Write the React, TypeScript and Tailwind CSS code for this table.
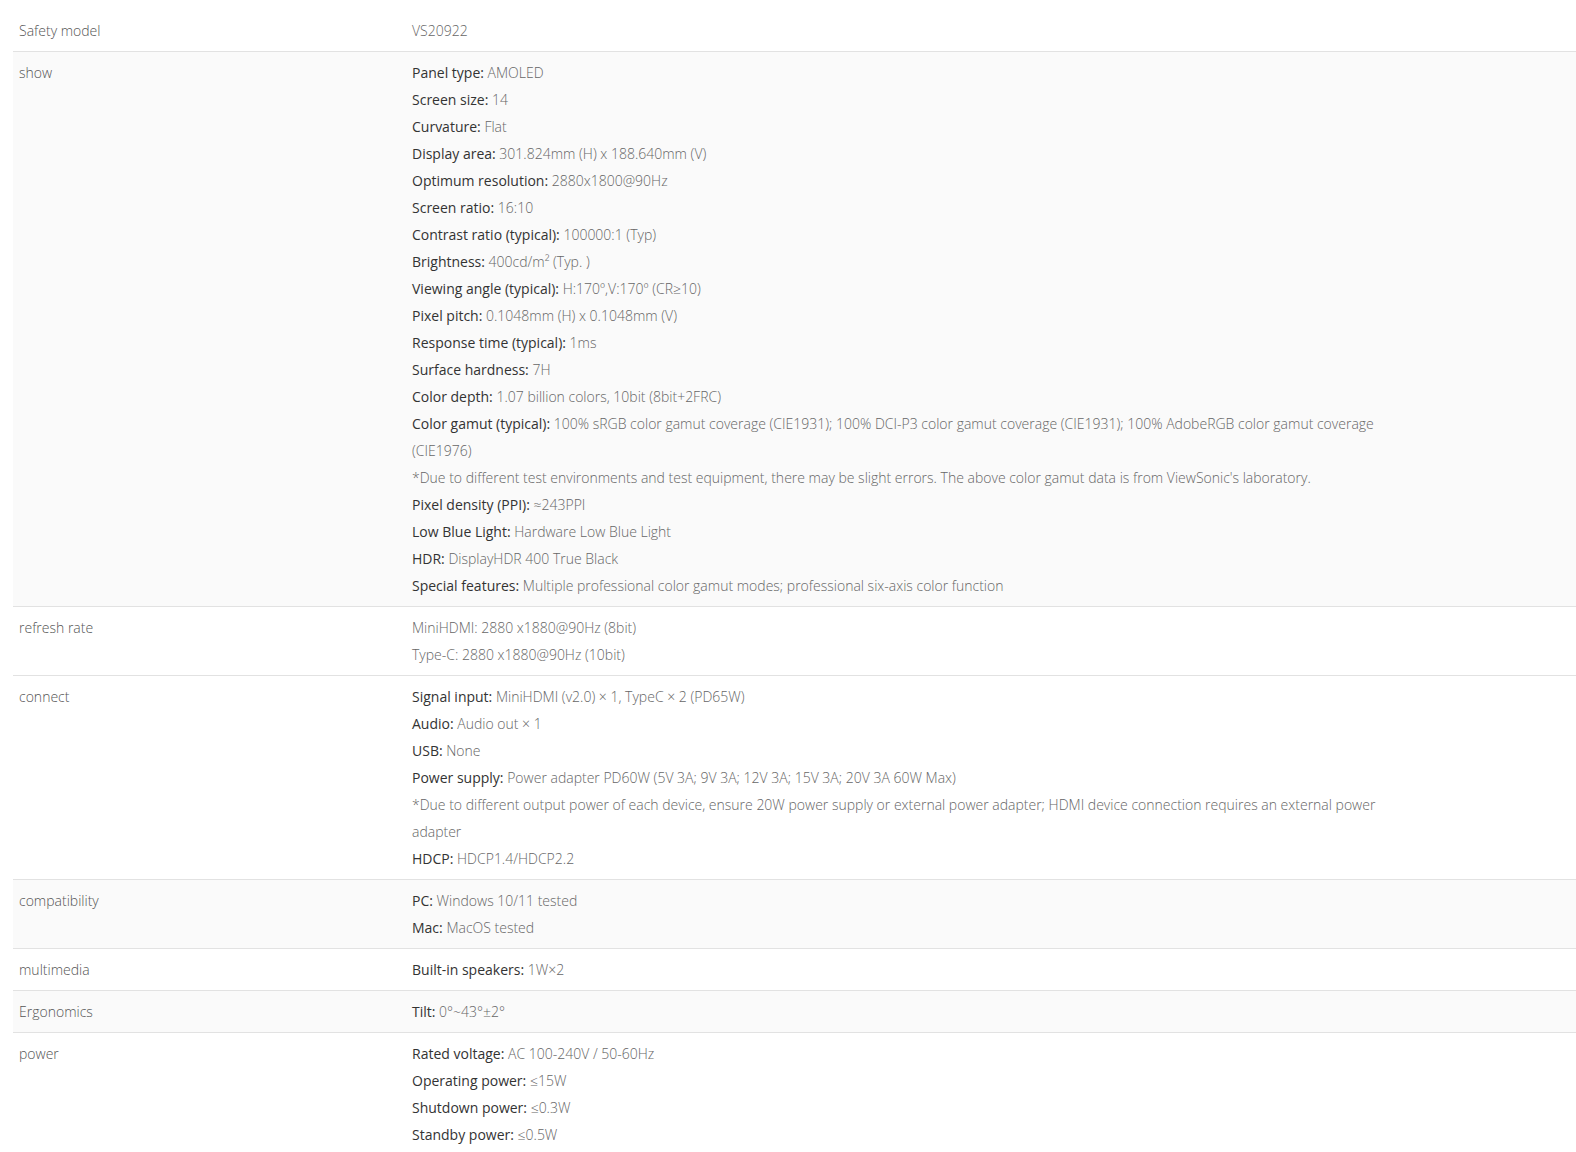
import React from "react";

type Line = { b?: string; t: string };
type Row = { label: string; lines: Line[]; grey?: boolean };

const rows: Row[] = [
  { label: "Safety model", lines: [{ t: "VS20922" }] },
  {
    label: "show",
    grey: true,
    lines: [
      { b: "Panel type:", t: "AMOLED" },
      { b: "Screen size:", t: "14" },
      { b: "Curvature:", t: "Flat" },
      { b: "Display area:", t: "301.824mm (H) x 188.640mm (V)" },
      { b: "Optimum resolution:", t: "2880x1800@90Hz" },
      { b: "Screen ratio:", t: "16:10" },
      { b: "Contrast ratio (typical):", t: "100000:1 (Typ)" },
      { b: "Brightness:", t: "400cd/m² (Typ. )" },
      { b: "Viewing angle (typical):", t: "H:170º,V:170º (CR≥10)" },
      { b: "Pixel pitch:", t: "0.1048mm (H) x 0.1048mm (V)" },
      { b: "Response time (typical):", t: "1ms" },
      { b: "Surface hardness:", t: "7H" },
      { b: "Color depth:", t: "1.07 billion colors, 10bit (8bit+2FRC)" },
      {
        b: "Color gamut (typical):",
        t: "100% sRGB color gamut coverage (CIE1931); 100% DCI-P3 color gamut coverage (CIE1931); 100% AdobeRGB color gamut coverage (CIE1976)",
      },
      {
        t: "*Due to different test environments and test equipment, there may be slight errors. The above color gamut data is from ViewSonic's laboratory.",
      },
      { b: "Pixel density (PPI):", t: "≈243PPI" },
      { b: "Low Blue Light:", t: "Hardware Low Blue Light" },
      { b: "HDR:", t: "DisplayHDR 400 True Black" },
      { b: "Special features:", t: "Multiple professional color gamut modes; professional six-axis color function" },
    ],
  },
  {
    label: "refresh rate",
    lines: [{ t: "MiniHDMI: 2880 x1880@90Hz (8bit)" }, { t: "Type-C: 2880 x1880@90Hz (10bit)" }],
  },
  {
    label: "connect",
    lines: [
      { b: "Signal input:", t: "MiniHDMI (v2.0) × 1, TypeC × 2 (PD65W)" },
      { b: "Audio:", t: "Audio out × 1" },
      { b: "USB:", t: "None" },
      { b: "Power supply:", t: "Power adapter PD60W (5V 3A; 9V 3A; 12V 3A; 15V 3A; 20V 3A 60W Max)" },
      {
        t: "*Due to different output power of each device, ensure 20W power supply or external power adapter; HDMI device connection requires an external power adapter",
      },
      { b: "HDCP:", t: "HDCP1.4/HDCP2.2" },
    ],
  },
  {
    label: "compatibility",
    grey: true,
    lines: [
      { b: "PC:", t: "Windows 10/11 tested" },
      { b: "Mac:", t: "MacOS tested" },
    ],
  },
  { label: "multimedia", lines: [{ b: "Built-in speakers:", t: "1W×2" }] },
  { label: "Ergonomics", grey: true, lines: [{ b: "Tilt:", t: "0°~43°±2°" }] },
  {
    label: "power",
    lines: [
      { b: "Rated voltage:", t: "AC 100-240V / 50-60Hz" },
      { b: "Operating power:", t: "≤15W" },
      { b: "Shutdown power:", t: "≤0.3W" },
      { b: "Standby power:", t: "≤0.5W" },
    ],
  },
];

export default function App() {
  return (
    <div
      className="min-h-screen bg-white pt-[10px] pl-[13px] text-[14px] leading-[27px] overflow-hidden"
      style={{ fontFamily: '"Open Sans", "Noto Sans", sans-serif' }}
    >
      {rows.map((r, i) => (
        <div
          key={i}
          className={`flex border-b border-[#e2e2e2] py-[7px] ${r.grey ? "bg-[#fafafa]" : "bg-white"}`}
        >
          <div className="w-[399px] shrink-0 pl-[6px] font-light text-[#555555]">{r.label}</div>
          <div className="w-[965px] shrink-0 font-light text-[#666666]">
            {r.lines.map((l, j) => (
              <div key={j}>
                {l.b && <span className="font-normal text-[#333333]">{l.b} </span>}
                {l.t}
              </div>
            ))}
          </div>
          <div className="flex-1" />
        </div>
      ))}
    </div>
  );
}
